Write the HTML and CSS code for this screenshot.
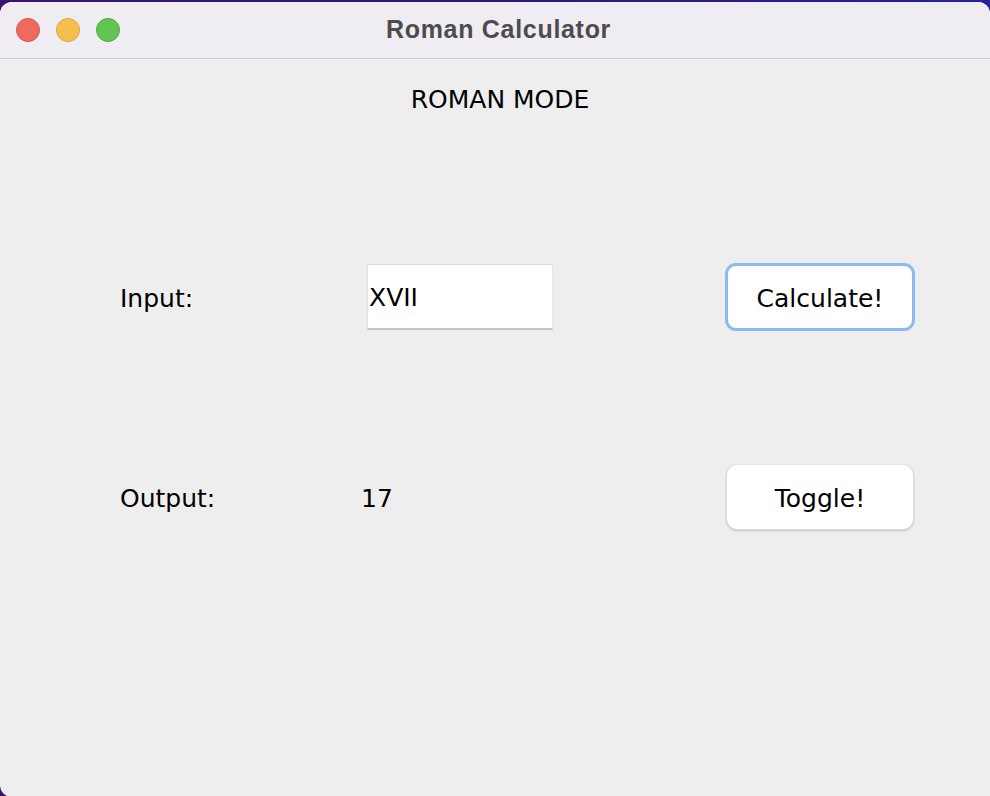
FILE: index.html
```html
<!DOCTYPE html>
<html>
<head>
<meta charset="utf-8">
<title>Roman Calculator</title>
<link rel="stylesheet" href="styles.css">
</head>
<body>
<div class="window">
  <div class="titlebar">
    <div class="lights">
      <span class="light red"></span>
      <span class="light yellow"></span>
      <span class="light green"></span>
    </div>
    <div class="title">Roman Calculator</div>
    <div class="spacer"></div>
  </div>
  <div class="content">
    <div class="mode">ROMAN MODE</div>
    <div class="grid">
      <div class="cell label">Input:</div>
      <div class="cell"><div class="field">XVII</div></div>
      <div class="cell"><button class="btn btn-focus">Calculate!</button></div>
      <div class="cell label">Output:</div>
      <div class="cell value">17</div>
      <div class="cell"><button class="btn btn-plain">Toggle!</button></div>
    </div>
  </div>
</div>
</body>
</html>
```

FILE: styles.css
```css
html, body {
  margin: 0;
  padding: 0;
  height: 100%;
  overflow: hidden;
}
body {
  background: linear-gradient(90deg, #3a1470 0%, #2f1780 50%, #28209c 100%);
  font-family: "DejaVu Sans", "Liberation Sans", sans-serif;
}
.window {
  margin-top: 2px;
  height: 795px;
  background: #eeeeee;
  border-radius: 12px 12px 0 12px;
  overflow: hidden;
}
.titlebar {
  height: 56px;
  background: #efedf2;
  border-bottom: 1px solid #c9c8cc;
  display: grid;
  grid-template-columns: 1fr auto 1fr;
  align-items: center;
}
.lights {
  display: flex;
  gap: 16px;
  padding-left: 16px;
}
.light {
  width: 22px;
  height: 22px;
  border-radius: 50%;
  border: 1px solid transparent;
}
.red { background: #ee6a5f; border-color: #d8574c; }
.yellow { background: #f5bf4f; border-color: #dea33a; }
.green { background: #61c554; border-color: #4eaa40; }
.title {
  font-family: "Liberation Sans", Arial, sans-serif;
  font-weight: bold;
  font-size: 25px;
  letter-spacing: 0.7px;
  color: #4c4c4c;
  padding-left: 7px;
  margin-top: -1px;
}
.content {
  color: #000;
  font-size: 25px;
}
.mode {
  padding-top: 26px;
  line-height: 30px;
  height: 30px;
  text-align: center;
  padding-left: 10px;
}
.grid {
  margin-top: 82px;
  padding-left: 120px;
  display: grid;
  grid-template-columns: 247px 358px 190px;
  grid-auto-rows: 200px;
}
.cell {
  display: flex;
  align-items: center;
  line-height: 30px;
}
.label, .value {
  padding-top: 3px;
}
.value {
  margin-left: -6px;
}
.field {
  background: #fff;
  border-top: 1px solid #dcdcdc;
  border-left: 1px solid #e2e2e2;
  border-right: 1px solid #e6e6e6;
  border-bottom: 2px solid #c4c4c4;
  box-sizing: border-box;
  width: 186px;
  height: 66px;
  display: flex;
  align-items: center;
  padding-left: 1px;
  padding-top: 3px;
}
.btn {
  font-family: "DejaVu Sans", "Liberation Sans", sans-serif;
  font-size: 25px;
  color: #000;
  background: #fff;
  border-radius: 11px;
  box-sizing: border-box;
  padding: 2px 0 0 0;
  cursor: default;
}
.btn-focus {
  width: 190px;
  height: 68px;
  border: 3px solid #8cb9ee;
}
.btn-plain {
  margin-left: 1px;
  width: 188px;
  height: 66px;
  border: 1px solid #dadada;
  border-top-color: #e4e4e4;
  box-shadow: 0 1px 2px rgba(0, 0, 0, 0.18);
}
```
